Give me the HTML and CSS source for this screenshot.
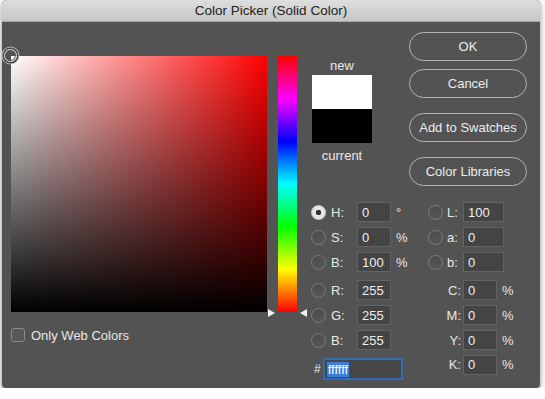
FILE: index.html
```html
<!DOCTYPE html>
<html lang="en">
<head>
  <meta charset="UTF-8" />
  <title>Color Picker (Solid Color)</title>
  <link rel="stylesheet" href="styles.css">
</head>
<body>
  <div class="window">
    <div class="titlebar">Color Picker (Solid Color)</div>

    <div class="content">
      <!-- saturation / brightness field -->
      <div class="picker-col">
        <div class="sb-field">
          <div class="sb-dark"></div>
          <div class="sb-marker"></div>
        </div>
        <label class="check-row">
          <span class="checkbox"></span>
          Only Web Colors
        </label>
      </div>

      <!-- hue slider -->
      <div class="hue-col">
        <div class="hue-bar">
          <span class="arrow arrow-left"></span>
          <span class="arrow arrow-right"></span>
        </div>
      </div>

      <div class="side">
        <div class="side-top">
          <div class="swatch-col">
            <div class="swatch-label">new</div>
            <div class="swatch">
              <div class="swatch-new"></div>
              <div class="swatch-current"></div>
            </div>
            <div class="swatch-label current">current</div>
          </div>

          <div class="buttons">
            <button class="btn">OK</button>
            <button class="btn btn-cancel">Cancel</button>
            <button class="btn btn-spaced">Add to Swatches</button>
            <button class="btn btn-spaced">Color Libraries</button>
          </div>
        </div>

        <!-- HSB + Lab -->
        <div class="section">
          <span class="radio checked"></span><span class="lbl">H:</span><input class="num" value="0"><span class="unit">°</span>
          <span class="radio"></span><span class="lbl">L:</span><input class="num wide" value="100"><span></span>

          <span class="radio"></span><span class="lbl">S:</span><input class="num" value="0"><span class="unit">%</span>
          <span class="radio"></span><span class="lbl">a:</span><input class="num wide" value="0"><span></span>

          <span class="radio"></span><span class="lbl">B:</span><input class="num" value="100"><span class="unit">%</span>
          <span class="radio"></span><span class="lbl">b:</span><input class="num wide" value="0"><span></span>
        </div>

        <!-- RGB + CMYK + hex -->
        <div class="section section-rgb">
          <span class="radio"></span><span class="lbl">R:</span><input class="num" value="255"><span class="unit"></span>
          <span class="cmyk">C:</span><input class="num" value="0"><span class="pct">%</span>

          <span class="radio"></span><span class="lbl">G:</span><input class="num" value="255"><span class="unit"></span>
          <span class="cmyk">M:</span><input class="num" value="0"><span class="pct">%</span>

          <span class="radio"></span><span class="lbl">B:</span><input class="num" value="255"><span class="unit"></span>
          <span class="cmyk">Y:</span><input class="num" value="0"><span class="pct">%</span>

          <div class="hex-row">
            <span class="hash">#</span>
            <div class="hex-input"><span class="sel">ffffff</span></div>
          </div>
          <span class="cmyk top">K:</span><input class="num top" value="0"><span class="pct top">%</span>
        </div>
      </div>
    </div>
  </div>
</body>
</html>
```

FILE: styles.css
```css
body {
  margin: 0;
  background: #fff;
  font-family: "Liberation Sans", Arial, sans-serif;
  font-size: 13px;
  color: #e8e8e8;
}

.window {
  margin-left: 2px;
  width: 538px;
  height: 388px;
  background: #535353;
  border-radius: 5px 5px 4px 4px;
  box-shadow: 0 2px 6px rgba(0, 0, 0, 0.45);
  overflow: hidden;
}

.titlebar {
  height: 21px;
  line-height: 22px;
  text-align: center;
  color: #222;
  font-size: 13.5px;
  background: linear-gradient(#dedede, #c6c6c6);
  border-bottom: 1px solid #a8a8a8;
}

.content {
  display: flex;
  padding: 10px 13px 0 9px;
}

/* left: saturation / brightness */
.picker-col {
  width: 256px;
  padding-top: 24px;
}

.sb-field {
  position: relative;
  width: 256px;
  height: 256px;
  background: linear-gradient(to right, #fff, #f00);
}

.sb-dark {
  position: absolute;
  inset: 0;
  background: linear-gradient(to bottom, rgba(0, 0, 0, 0), #000);
}

.sb-marker {
  position: absolute;
  left: -7px;
  top: -7px;
  width: 11px;
  height: 11px;
  border-radius: 50%;
  border: 1.5px solid #d8d8d8;
  box-shadow: 0 0 0 1.5px #444, 0 0 0 2.5px #bbb, inset 0 0 0 1px #555;
}

.check-row {
  display: flex;
  align-items: center;
  gap: 6px;
  margin-top: 16px;
  height: 14px;
  font-size: 13px;
}

.checkbox {
  width: 12px;
  height: 12px;
  border: 1px solid #8c8c8c;
  border-radius: 3px;
  background: #575757;
}

/* hue slider */
.hue-col {
  width: 42px;
  padding-top: 24px;
}

.hue-bar {
  position: relative;
  width: 19px;
  height: 256px;
  margin-left: 11px;
  background: linear-gradient(to bottom, #f00 0%, #f0f 16.67%, #00f 33.33%, #0ff 50%, #0f0 66.67%, #ff0 83.33%, #f00 100%);
}

.arrow {
  position: absolute;
  bottom: -5px;
  width: 0;
  height: 0;
  border-top: 4.5px solid transparent;
  border-bottom: 4.5px solid transparent;
}

.arrow-left {
  left: -10px;
  border-left: 7px solid #f2f2f2;
}

.arrow-right {
  right: -10px;
  border-right: 7px solid #f2f2f2;
}

/* right side */
.side {
  flex: 1;
}

.side-top {
  display: flex;
  padding-left: 3px;
}

.swatch-col {
  width: 60px;
  padding-top: 26px;
  text-align: center;
}

.swatch-label {
  height: 16px;
  line-height: 16px;
  margin-bottom: 1px;
}

.swatch-label.current {
  margin-top: 5px;
}

.swatch {
  width: 60px;
  height: 68px;
}

.swatch-new {
  height: 34px;
  background: #fff;
}

.swatch-current {
  height: 34px;
  background: #000;
}

.buttons {
  margin-left: auto;
  display: flex;
  flex-direction: column;
  width: 118px;
}

.btn {
  height: 29px;
  border: 1px solid #b4b4b4;
  border-radius: 15px;
  background: transparent;
  color: #ececec;
  font-family: inherit;
  font-size: 13px;
  padding: 0;
}

.btn-cancel {
  margin-top: 8px;
}

.btn-spaced {
  margin-top: 15px;
}

/* numeric fields */
.section {
  display: grid;
  grid-template-columns: 20px 26px 34px 37px 19px 16px 34px 7px auto;
  grid-template-rows: 20px 20px 20px;
  row-gap: 5px;
  align-items: center;
  margin-top: 16px;
  padding-left: 2px;
}

.section-rgb {
  grid-template-rows: 20px 20px 20px 25px;
  margin-top: 8px;
}

.radio {
  width: 13px;
  height: 13px;
  border-radius: 50%;
  border: 1px solid #7c7c7c;
  background: linear-gradient(#4c4c4c, #575757);
}

.radio.checked {
  border-color: #cfcfcf;
  background: radial-gradient(circle, #333 0 2.5px, #e6e6e6 3px);
}

.num {
  box-sizing: border-box;
  width: 34px;
  height: 20px;
  border: 1px solid #636363;
  background: #444;
  color: #eee;
  font-family: inherit;
  font-size: 13px;
  padding: 0 4px;
  margin: 0;
  outline: none;
}

.num.wide {
  width: 41px;
  grid-column: 7 / 9;
}

.unit {
  padding-left: 5px;
}

.cmyk {
  grid-column: 5 / 7;
  text-align: right;
  padding-right: 2px;
}

.pct {
  grid-column: 8 / 10;
  padding-left: 5px;
}

.top {
  align-self: start;
  line-height: 20px;
}

.hex-row {
  grid-column: 1 / 5;
  align-self: end;
  display: flex;
  align-items: center;
  gap: 2px;
  height: 22px;
  padding-left: 3px;
}

.hash {
  font-size: 12px;
}

.hex-input {
  box-sizing: border-box;
  width: 80px;
  height: 22px;
  border: 2px solid #2f6cb3;
  background: #464646;
  padding: 2px;
  display: flex;
  align-items: center;
}

.sel {
  background: #3c7fd6;
  color: #fff;
  padding: 0 1px;
  line-height: 15px;
}
```
